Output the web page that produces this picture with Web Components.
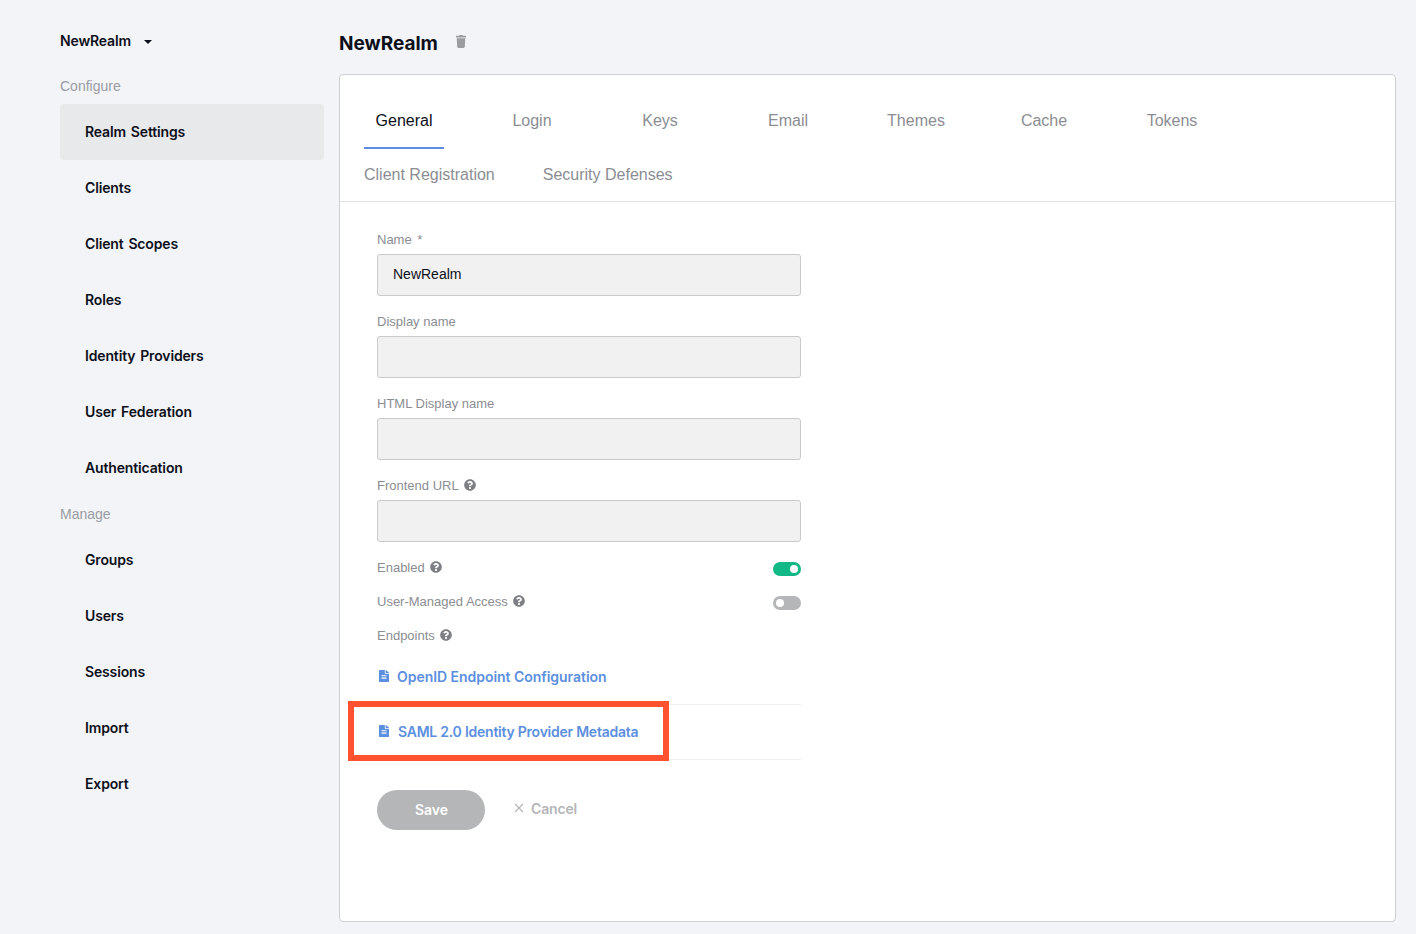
<!DOCTYPE html>
<html lang="en">
  <head>
    <meta charset="UTF-8">
    <title>Realm Settings</title>
    <style>
      html, body { margin: 0; height: 100%; }
      body {
        background: #f2f4f8;
        font-family: "Liberation Sans", Arial, sans-serif;
        color: #0d0f1a;
      }
    </style>
  </head>
  <body>
    <realm-app>
      <side-nav slot="nav"></side-nav>
      <realm-page slot="main"></realm-page>
    </realm-app>

    <script>
      const HELP = `<svg class="help" width="12" height="12" viewBox="0 0 512 512"><path fill="#7d7f85" d="M504 256c0 136.997-111.043 248-248 248S8 392.997 8 256C8 119.083 119.043 8 256 8s248 111.083 248 248zM262.655 90c-54.497 0-89.255 22.957-116.549 63.758-3.536 5.286-2.353 12.415 2.715 16.258l34.699 26.31c5.205 3.947 12.621 3.008 16.665-2.122 17.864-22.658 30.113-35.797 57.303-35.797 20.429 0 45.698 13.148 45.698 32.958 0 14.976-12.363 22.667-32.534 33.976C247.128 238.528 216 254.941 216 296v4c0 6.627 5.373 12 12 12h56c6.627 0 12-5.373 12-12v-1.333c0-28.462 83.186-29.647 83.186-106.667 0-58.002-60.165-102-116.531-102zM256 338c-25.365 0-46 20.635-46 46 0 25.364 20.635 46 46 46s46-20.636 46-46c0-25.365-20.635-46-46-46z"/></svg>`
      const DOC = `<svg width="10" height="12" viewBox="0 0 384 512" preserveAspectRatio="none"><path fill="#5c8fdf" d="M224 136V0H24C10.7 0 0 10.7 0 24v464c0 13.3 10.7 24 24 24h336c13.3 0 24-10.7 24-24V160H248c-13.2 0-24-10.8-24-24zm64 236c0 6.6-5.4 12-12 12H108c-6.6 0-12-5.4-12-12v-8c0-6.6 5.4-12 12-12h168c6.6 0 12 5.4 12 12v8zm0-64c0 6.6-5.4 12-12 12H108c-6.6 0-12-5.4-12-12v-8c0-6.6 5.4-12 12-12h168c6.6 0 12 5.4 12 12v8zm0-72v8c0 6.6-5.4 12-12 12H108c-6.6 0-12-5.4-12-12v-8c0-6.6 5.4-12 12-12h168c6.6 0 12 5.4 12 12zm96-114.1v6.1H256V0h6.1c6.4 0 12.5 2.5 17 7l97.9 98c4.5 4.5 7 10.6 7 16.9z"/></svg>`

      class RealmApp extends HTMLElement {
        constructor() {
          super()
          this.attachShadow({ mode: 'open' }).innerHTML = `
            <style>
              :host { display: flex; height: 934px; box-sizing: border-box; padding-left: 60px; }
              .nav { width: 264px; flex: none; }
              .main { margin-left: 15px; width: 1057px; flex: none; }
            </style>
            <div class="nav"><slot name="nav"></slot></div>
            <div class="main"><slot name="main"></slot></div>`
        }
      }

      class SideNav extends HTMLElement {
        constructor() {
          super()
          const group = (title, items, active) => `
            <div class="title">${title}</div>
            ${items.map(i => `<div class="item${i === active ? ' active' : ''}">${i}</div>`).join('')}`
          this.attachShadow({ mode: 'open' }).innerHTML = `
            <style>
              :host { display: block; font-family: Inter, "Liberation Sans", sans-serif; }
              .realm {
                height: 68px; display: flex; align-items: center; padding-top: 13px; box-sizing: border-box;
                font-size: 14px; font-weight: 600; letter-spacing: -0.15px; color: #0d0f1a;
              }
              .caret { width: 0; height: 0; margin-left: 13px; margin-top: 3px; border: 4px solid transparent; border-top: 4px solid #0d0f1a; border-bottom: 0; }
              .title {
                height: 36px; line-height: 36px;
                font: 14px/36px "Liberation Sans", Arial, sans-serif; color: #9a9ca3;
              }
              .item {
                height: 56px; line-height: 56px; padding-left: 25px; border-radius: 4px;
                font-size: 14px; font-weight: 600; letter-spacing: -0.15px; word-spacing: 1.5px; color: #0d0f1a;
              }
              .active { background: #e8e9eb; }
            </style>
            <div class="realm">NewRealm<span class="caret"></span></div>
            ${group('Configure', ['Realm Settings', 'Clients', 'Client Scopes', 'Roles', 'Identity Providers', 'User Federation', 'Authentication'], 'Realm Settings')}
            ${group('Manage', ['Groups', 'Users', 'Sessions', 'Import', 'Export'])}`
        }
      }

      class RealmPage extends HTMLElement {
        constructor() {
          super()
          this.attachShadow({ mode: 'open' }).innerHTML = `
            <style>
              :host { display: block; }
              .head { height: 74px; display: flex; align-items: center; padding-top: 12px; box-sizing: border-box; }
              h1 { margin: 0; font: 700 19px Inter, "Liberation Sans", sans-serif; color: #0d0f1a; }
              .trash { margin-left: 18px; margin-top: -3px; display: block; }
              .card {
                height: 848px; box-sizing: border-box; background: #fff;
                border: 1px solid #cfd0d3; border-radius: 4px;
              }
              .form { padding: 29px 0 0 37px; width: 424px; }
              form-field + form-field { margin-top: 8px; }
            </style>
            <div class="head">
              <h1>NewRealm</h1>
              <svg class="trash" width="10" height="13" viewBox="0 0 448 512" preserveAspectRatio="none"><path fill="#9b9c9f" d="M432 32H312l-9.4-18.7A24 24 0 0 0 281.1 0H166.8a23.72 23.72 0 0 0-21.4 13.3L136 32H16A16 16 0 0 0 0 48v32a16 16 0 0 0 16 16h416a16 16 0 0 0 16-16V48a16 16 0 0 0-16-16zM53.2 467a48 48 0 0 0 47.9 45h245.8a48 48 0 0 0 47.9-45L416 128H32z"/></svg>
            </div>
            <div class="card">
              <tab-bar></tab-bar>
              <div class="form">
                <form-field label="Name <span style='margin-left:2px'>*</span>" value="NewRealm"></form-field>
                <form-field label="Display name"></form-field>
                <form-field label="HTML Display name"></form-field>
                <form-field label="Frontend URL" help></form-field>
                <switch-row label="Enabled" state="on"></switch-row>
                <switch-row label="User-Managed Access" state="off"></switch-row>
                <switch-row label="Endpoints"></switch-row>
                <endpoint-link label="OpenID Endpoint Configuration"></endpoint-link>
                <endpoint-link label="SAML 2.0 Identity Provider Metadata" marked></endpoint-link>
                <form-actions></form-actions>
              </div>
            </div>`
        }
      }

      class TabBar extends HTMLElement {
        constructor() {
          super()
          const tabs = ['General', 'Login', 'Keys', 'Email', 'Themes', 'Cache', 'Tokens', 'Client Registration', 'Security Defenses']
          this.attachShadow({ mode: 'open' }).innerHTML = `
            <style>
              :host {
                display: flex; flex-wrap: wrap; align-content: flex-start; column-gap: 48px; box-sizing: border-box;
                height: 127px; padding: 18px 24px 0; border-bottom: 1px solid #e3e4e6;
                font-size: 16px; color: #8b8d93;
              }
              .tab { min-width: 80px; height: 56px; line-height: 56px; text-align: center; box-sizing: border-box; }
              .row2 { height: 52px; line-height: 52px; }
              .on { color: #0d0f1a; border-bottom: 2px solid #5c8fdf; }
            </style>
            ${tabs.map((t, i) => `<div class="tab${i === 0 ? ' on' : ''}${i > 6 ? ' row2' : ''}">${t}</div>`).join('')}`
        }
      }

      class FormField extends HTMLElement {
        constructor() {
          super()
          this.attachShadow({ mode: 'open' }).innerHTML = `
            <style>
              :host { display: block; height: 74px; font-size: 14px; }
              label { display: flex; align-items: center; gap: 5px; height: 16px; color: #8b8d93; font-size: 13px; margin-bottom: 7px; }
              .box {
                height: 42px; box-sizing: border-box; padding-left: 15px; line-height: 38px;
                background: #f1f1f1; border: 1px solid #c9cacc; border-radius: 3px; color: #0d0f1a;
              }
            </style>
            <label><span>${this.getAttribute('label')}</span>${this.hasAttribute('help') ? HELP : ''}</label>
            <div class="box">${this.getAttribute('value') || ''}</div>`
        }
      }

      class SwitchRow extends HTMLElement {
        constructor() {
          super()
          const state = this.getAttribute('state')
          this.attachShadow({ mode: 'open' }).innerHTML = `
            <style>
              :host {
                display: flex; align-items: center; justify-content: space-between; height: 34px;
                font-size: 13px; color: #8b8d93;
              }
              .text { display: flex; align-items: center; gap: 5px; margin-top: -2px; }
              .toggle { width: 28px; height: 14px; border-radius: 7px; position: relative; margin-top: 2px; }
              .toggle.on { background: #12b886; }
              .toggle.off { background: #b5b6b8; }
              .toggle::after { content: ''; position: absolute; top: 3px; width: 8px; height: 8px; border-radius: 50%; background: #fff; }
              .toggle.on::after { right: 3px; }
              .toggle.off::after { left: 3px; }
            </style>
            <span class="text">${this.getAttribute('label')}${HELP}</span>
            ${state ? `<span class="toggle ${state}"></span>` : ''}`
        }
      }

      class EndpointLink extends HTMLElement {
        constructor() {
          super()
          this.attachShadow({ mode: 'open' }).innerHTML = `
            <style>
              :host {
                display: flex; align-items: center; gap: 8px; height: 51px; padding: 0 0 5px 2px; box-sizing: border-box;
                position: relative; font: 600 14px Inter, "Liberation Sans", sans-serif; letter-spacing: -0.04px; color: #5c8fdf;
              }
              :host([marked]) {
                gap: 9px; height: 56px; padding-bottom: 2px; letter-spacing: -0.24px;
                border-top: 1px solid #eeeff1; border-bottom: 1px solid #eeeff1;
              }
              .mark { position: absolute; left: -29px; top: -4px; width: 321px; height: 60px; box-sizing: border-box; border: 6px solid #ff5230; }
            </style>
            ${DOC}<span>${this.getAttribute('label')}</span>
            ${this.hasAttribute('marked') ? '<span class="mark"></span>' : ''}`
        }
      }

      class FormActions extends HTMLElement {
        constructor() {
          super()
          this.attachShadow({ mode: 'open' }).innerHTML = `
            <style>
              :host { display: flex; align-items: center; margin-top: 30px; font: 600 14px Inter, "Liberation Sans", sans-serif; }
              .save { width: 108px; height: 40px; line-height: 40px; text-align: center; border-radius: 20px; background: #b5b6b8; color: #fff; text-indent: 1px; }
              .cancel { display: flex; align-items: center; gap: 7px; margin-left: 29px; margin-top: -4px; color: #b5b6b8; letter-spacing: -0.15px; }
            </style>
            <div class="save">Save</div>
            <div class="cancel">
              <svg width="10" height="10" viewBox="0 0 10 10"><path d="M1 1l8 8M9 1l-8 8" stroke="#b5b6b8" stroke-width="1.1" fill="none"/></svg>
              Cancel
            </div>`
        }
      }

      customElements.define('realm-app', RealmApp)
      customElements.define('side-nav', SideNav)
      customElements.define('realm-page', RealmPage)
      customElements.define('tab-bar', TabBar)
      customElements.define('form-field', FormField)
      customElements.define('switch-row', SwitchRow)
      customElements.define('endpoint-link', EndpointLink)
      customElements.define('form-actions', FormActions)
    </script>
  </body>
</html>
